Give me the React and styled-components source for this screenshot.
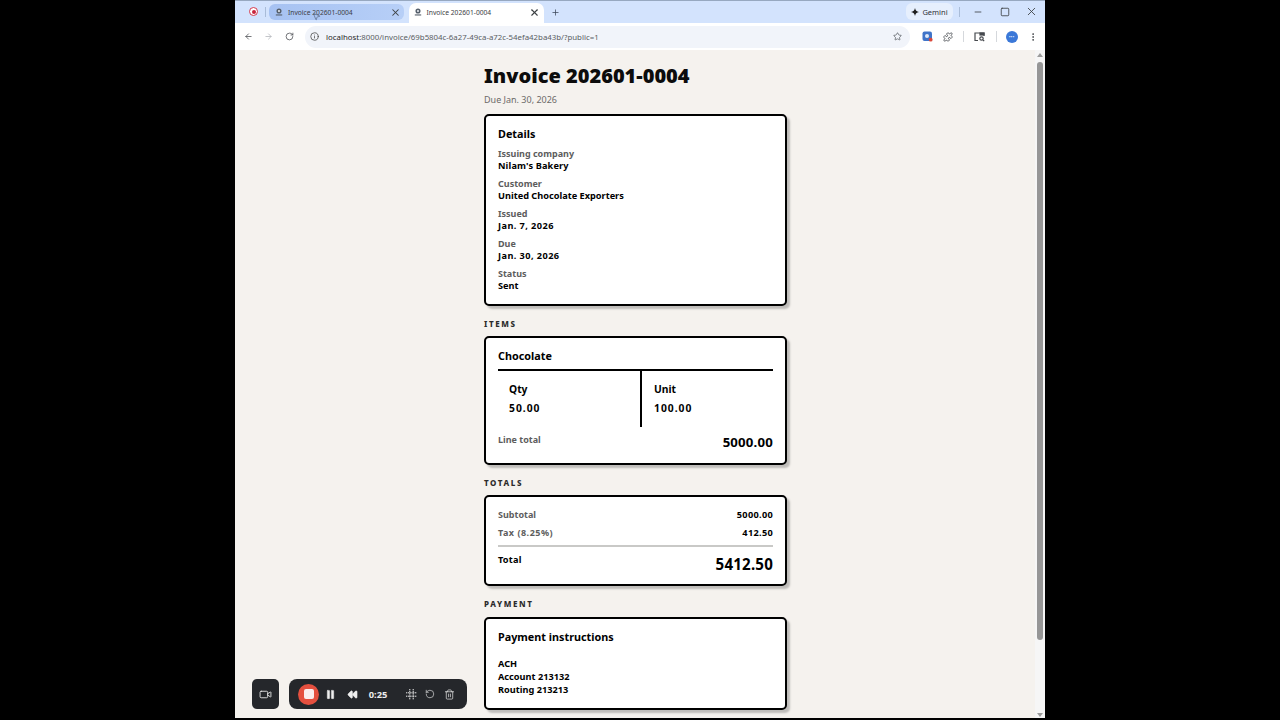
import React from 'react';
import styled, { createGlobalStyle } from 'styled-components';
import { ArrowLeft, ArrowRight, RotateCw, Info, Star, Puzzle, X, Plus, Minus, Square, MoreVertical, Video, Pause, Rewind, RotateCcw, Trash2, MousePointer2 } from 'lucide-react';

const Global = createGlobalStyle`
  html, body { margin: 0; padding: 0; background: #000; height: 720px; overflow: hidden; }
  #root { height: 720px; }
`;
const Stage = styled.div`
  width: 1280px; height: 720px; background: #000; display: flex; justify-content: center;
  font-family: "Noto Sans", "Open Sans", sans-serif; position: relative;
`;
const Win = styled.div`
  width: 810px; height: 718px; display: flex; flex-direction: column; overflow: hidden; background: #f5f2ee;
`;
const TitleBar = styled.div`
  height: 23px; background: #d3e3fd; box-shadow: inset 0 1px #97a8c0; display: flex; align-items: flex-end; flex: none; color: #1f1f1f; box-sizing: border-box;
`;
const RecDot = styled.div`
  width: 9px; height: 9px; border-radius: 50%; border: 1.5px solid #d33a4e; background: #fff; margin: 0 0 7px 14px;
  display: flex; align-items: center; justify-content: center; box-sizing: border-box; flex: none;
  &::after { content: ""; width: 4px; height: 4px; border-radius: 50%; background: #c8243c; }
`;
const Sep = styled.div`
  width: 1px; height: 10px; background: #a9bcd8; margin: ${p => p.$m || '0 0 6px 7px'}; flex: none;
`;
const Tab = styled.div`
  width: 135px; height: ${p => p.$active ? '20px' : '16px'};
  margin: ${p => p.$active ? '0 0 0 5px' : '0 0 3px 3px'};
  background: ${p => p.$active ? '#fff' : 'linear-gradient(90deg, #a6c2f2, #b7cff7)'}; border-radius: ${p => p.$active ? '7px 7px 0 0' : '6px'};
  display: flex; align-items: center; padding: ${p => p.$active ? '0 4px 2px 4.5px' : '0 3px 0 6px'}; box-sizing: border-box;
  font-size: 6.7px; color: #3c4043; white-space: nowrap; flex: none;
`;
const TabIcon = styled.svg`
  width: 8px; height: 8px; margin-right: 5px; flex: none;
`;
const TabTitle = styled.span` flex: 1; `;
const NewTab = styled.div`
  margin: 0 0 6px 7px; display: flex; color: #3c4758;
`;
const Spring = styled.div` flex: 1; `;
const Gemini = styled.div`
  height: 17px; width: 47px; margin-bottom: 3px; border-radius: 6px; background: #e6effd;
  display: flex; align-items: center; justify-content: center; gap: 3px; font-size: 7.5px; color: #303338; flex: none;
`;
const WinBtn = styled.div`
  width: 27px; height: 23px; display: flex; align-items: center; justify-content: center; color: #3c4043; align-self: flex-start; flex: none;
`;
const ToolBar = styled.div`
  height: 27px; background: #fff; display: flex; align-items: center; flex: none; color: #474a4f; padding-left: 3px; box-sizing: border-box;
`;
const NavBtn = styled.div`
  width: 20.5px; display: flex; justify-content: center; color: ${p => p.$off ? '#b0b3b8' : '#474a4f'}; flex: none;
`;
const Omni = styled.div`
  width: 605px; height: 22px; margin-left: 5.5px; border-radius: 11px; background: #f1f4fa; display: flex; align-items: center;
  padding: 0 8.5px 0 5px; box-sizing: border-box; font-size: 7.85px; color: #5a5e63; flex: none;
`;
const OmniInfo = styled.span` display: flex; margin-right: 7px; color: #444; `;
const UrlHost = styled.span` color: #1f1f1f; `;
const UrlText = styled.span` flex: 1; white-space: nowrap; `;
const ToolIcons = styled.div`
  flex: 1; display: flex; align-items: center; color: #474a4f; padding-left: 6.5px;
`;
const TIcon = styled.div`
  width: ${p => p.$w || 21}px; display: flex; justify-content: center; flex: none;
`;
const Avatar = styled.div`
  width: 12px; height: 12px; border-radius: 50%; background: #3b78d8; color: #dce9fb; font-size: 5px; display: flex; align-items: center; justify-content: center;
`;
const VSep = styled.div`
  width: 1px; height: 11px; background: #d5d8dc; flex: none; margin: 0 ${p => p.$m || 5}px;
`;
const Viewport = styled.div`
  flex: 1; display: flex; min-height: 0; overflow: hidden; background: #f5f2ee;
`;
const Page = styled.main`
  flex: 1; display: flex; justify-content: center; overflow: hidden; color: #000; padding-left: 1px;
`;
const Column = styled.div`
  width: 303px; padding-top: 13px; flex: none;
`;
const Title = styled.h1`
  margin: 0; font-size: 20px; line-height: 26px; font-weight: 900; color: #0c0c0c; white-space: nowrap;
`;
const Due = styled.p`
  margin: 3px 0 0; font-size: 9px; line-height: 15px; color: #6c6a68;
`;
const Card = styled.section`
  background: #fff; border: 2px solid #000; border-radius: 5px; box-shadow: 3px 3px 2px #bfbdba;
  box-sizing: border-box; height: ${p => p.$h}px; padding: ${p => p.$pad || '11px 12px'}; margin-top: ${p => p.$mt || 0}px;
`;
const CardTitle = styled.h2`
  margin: 0; font-size: 10.8px; line-height: 14px; font-weight: 700; color: #000;
`;
const Field = styled.div`
  margin-top: ${p => p.$mt}px;
`;
const Label = styled.div`
  font-size: 9px; line-height: 12px; font-weight: 700; color: #5d5d5d; letter-spacing: ${p => p.$ls || 0}px;
`;
const Value = styled.div`
  font-size: 9.2px; line-height: 12px; font-weight: 700; color: #000; letter-spacing: ${p => p.$ls || 0}px;
`;
const Section = styled.h3`
  margin: ${p => p.$mt}px 0 0; font-size: 8px; line-height: 12px; font-weight: 800; letter-spacing: 1.6px; color: #2b2b2b;
`;
const ItemGrid = styled.div`
  display: grid; grid-template-columns: 142px 1fr; border-top: 2px solid #000; margin-top: 6px; height: 58px; box-sizing: border-box;
`;
const ItemCell = styled.div`
  padding: 11px 0 0 ${p => p.$line ? 12 : 11}px; border-left: ${p => p.$line ? '2px solid #000' : '0'};
`;
const ItemLabel = styled.div`
  font-size: 10.3px; line-height: 14px; font-weight: 700;
`;
const ItemValue = styled.div`
  font-size: 10.3px; line-height: 14px; font-weight: 700; margin-top: 5px; letter-spacing: 1px;
`;
const Row = styled.div`
  display: flex; justify-content: space-between; align-items: ${p => p.$start ? 'flex-start' : 'center'}; margin-top: ${p => p.$mt || 0}px;
`;
const BigAmount = styled.div`
  font-size: ${p => p.$size}px; line-height: ${p => p.$lh}px; font-weight: 700; color: #000; letter-spacing: .2px;
`;
const Rule = styled.div`
  height: 2px; background: #c9c9c7; margin-top: 6px;
`;
const Note = styled.div`
  margin-top: 13.4px; font-size: 9.2px; line-height: 13px; font-weight: 700;
`;
const ScrollBar = styled.div`
  width: 10px; flex: none; background: #f6f6f6; display: flex; flex-direction: column; align-items: center; padding: 3px 0 0; box-sizing: border-box;
`;
const ArrowUp = styled.div`
  width: 0; height: 0; border-left: 3px solid transparent; border-right: 3px solid transparent; border-bottom: 4px solid #9c9c9c;
`;
const ArrowDown = styled.div`
  width: 0; height: 0; border-left: 3px solid transparent; border-right: 3px solid transparent; border-top: 4px solid #9c9c9c; margin-top: auto; margin-bottom: 1px;
`;
const Thumb = styled.div`
  width: 6px; height: 578px; background: #969696; border-radius: 3px; margin-top: 5px;
`;
const Recorder = styled.div`
  position: absolute; left: 252px; top: 679px; display: flex; gap: 10px; color: #eee;
`;
const CamBox = styled.div`
  width: 27px; height: 30px; border-radius: 5px; background: #25272b; display: flex; align-items: center; justify-content: center;
`;
const RecBar = styled.div`
  width: 178px; height: 30px; border-radius: 8px; background: #25272b; display: flex; align-items: center; padding-left: 9px; box-sizing: border-box; font-size: 9.3px; font-weight: 700;
`;
const StopBtn = styled.div`
  width: 21px; height: 21px; border-radius: 50%; background: #e5503f; display: flex; align-items: center; justify-content: center; flex: none;
  &::after { content: ""; width: 10px; height: 10px; background: #fbeeee; border-radius: 2px; }
`;
const Rb = styled.div`
  display: flex; justify-content: center; flex: none; width: ${p => p.$w}px; margin-left: ${p => p.$ml || 0}px;
`;
const Cursor = styled.div`
  position: absolute; left: 312px; top: 12px; color: #5d6f8c; display: flex;
`;

const Favicon = () => (
  <TabIcon viewBox="0 0 10 10"><circle cx="5" cy="3.8" r="3.2" fill="#56606c"/><circle cx="5" cy="3.8" r="1.3" fill="#e8ecf2"/><rect x="1" y="8" width="8" height="1.4" fill="#56606c"/></TabIcon>
);

export default function App() {
  return (
    <Stage>
      <Global />
      <Win>
        <TitleBar>
          <RecDot />
          <Sep />
          <Tab>
            <Favicon /><TabTitle>Invoice 202601-0004</TabTitle><X size={11} strokeWidth={2.2} />
          </Tab>
          <Tab $active>
            <Favicon /><TabTitle>Invoice 202601-0004</TabTitle><X size={11} strokeWidth={2.4} />
          </Tab>
          <NewTab><Plus size={9} strokeWidth={2} /></NewTab>
          <Spring />
          <Gemini>
            <svg width="8" height="8" viewBox="0 0 10 10"><path d="M5 0 C5.5 3 7 4.5 10 5 C7 5.5 5.5 7 5 10 C4.5 7 3 5.5 0 5 C3 4.5 4.5 3 5 0Z" fill="#1f1f1f"/></svg>
            Gemini
          </Gemini>
          <Sep $m="0 4px 6px 6px" />
          <WinBtn><Minus size={10} /></WinBtn>
          <WinBtn><Square size={10} strokeWidth={2} /></WinBtn>
          <WinBtn><X size={13} strokeWidth={1.6} /></WinBtn>
        </TitleBar>
        <ToolBar>
          <NavBtn><ArrowLeft size={9} strokeWidth={2} /></NavBtn>
          <NavBtn $off><ArrowRight size={9} strokeWidth={2} /></NavBtn>
          <NavBtn><RotateCw size={9} strokeWidth={2} /></NavBtn>
          <Omni>
            <OmniInfo><Info size={9} strokeWidth={2} /></OmniInfo>
            <UrlText><UrlHost>localhost</UrlHost>:8000/invoice/69b5804c-6a27-49ca-a72c-54efa42ba43b/?public=1</UrlText>
            <Star size={9} strokeWidth={2} />
          </Omni>
          <ToolIcons>
            <TIcon>
              <svg width="11" height="11" viewBox="0 0 11 11"><rect x=".5" y=".5" width="9.5" height="9.5" rx="2" fill="#3f74c9"/><circle cx="5" cy="5" r="2" fill="#dfe9f8"/><circle cx="8.7" cy="8.7" r="1.9" fill="#d9483b"/></svg>
            </TIcon>
            <TIcon><Puzzle size={10} strokeWidth={2} /></TIcon>
            <VSep $m={4} />
            <TIcon $w={24}>
              <svg width="11" height="10" viewBox="0 0 11 10" fill="none" stroke="#474a4f" strokeWidth="1.2"><path d="M4 8.5H1V1h9v3"/><circle cx="7.5" cy="6.5" r="1.7"/><path d="M9 8l1.2 1.2"/><rect x="6" y="1" width="4" height="2" fill="#474a4f"/></svg>
            </TIcon>
            <VSep $m={4} />
            <TIcon $w={22}><Avatar>•••</Avatar></TIcon>
            <TIcon $w={20}><MoreVertical size={10} strokeWidth={2.2} /></TIcon>
          </ToolIcons>
        </ToolBar>
        <Viewport>
          <Page>
            <Column>
              <Title>Invoice 202601-0004</Title>
              <Due>Due Jan. 30, 2026</Due>
              <Card $h={192} $mt={7}>
                <CardTitle>Details</CardTitle>
                <Field $mt={7}><Label>Issuing company</Label><Value $ls={0.15}>Nilam's Bakery</Value></Field>
                <Field $mt={6}><Label>Customer</Label><Value>United Chocolate Exporters</Value></Field>
                <Field $mt={6}><Label>Issued</Label><Value $ls={0.42}>Jan. 7, 2026</Value></Field>
                <Field $mt={6}><Label>Due</Label><Value $ls={0.42}>Jan. 30, 2026</Value></Field>
                <Field $mt={6}><Label>Status</Label><Value>Sent</Value></Field>
              </Card>
              <Section $mt={12}>ITEMS</Section>
              <Card $h={129} $mt={6}>
                <CardTitle>Chocolate</CardTitle>
                <ItemGrid>
                  <ItemCell>
                    <ItemLabel>Qty</ItemLabel><ItemValue>50.00</ItemValue>
                  </ItemCell>
                  <ItemCell $line>
                    <ItemLabel>Unit</ItemLabel><ItemValue>100.00</ItemValue>
                  </ItemCell>
                </ItemGrid>
                <Row $start $mt={7}>
                  <Label>Line total</Label>
                  <BigAmount $size={13.2} $lh={16}>5000.00</BigAmount>
                </Row>
              </Card>
              <Section $mt={12}>TOTALS</Section>
              <Card $h={91} $mt={6} $pad="12px 12px">
                <Row><Label>Subtotal</Label><Value $ls={0.3}>5000.00</Value></Row>
                <Row $mt={6}><Label $ls={0.5}>Tax (8.25%)</Label><Value $ls={0.3}>412.50</Value></Row>
                <Rule />
                <Row $start $mt={7}>
                  <Value $ls={0.2}>Total</Value>
                  <BigAmount $size={15.1} $lh={20}>5412.50</BigAmount>
                </Row>
              </Card>
              <Section $mt={12}>PAYMENT</Section>
              <Card $h={93} $mt={7}>
                <CardTitle>Payment instructions</CardTitle>
                <Note>ACH<br />Account 213132<br />Routing 213213</Note>
              </Card>
            </Column>
          </Page>
          <ScrollBar>
            <ArrowUp /><Thumb /><ArrowDown />
          </ScrollBar>
        </Viewport>
      </Win>
      <Cursor><MousePointer2 size={9} /></Cursor>
      <Recorder>
        <CamBox><Video size={13} strokeWidth={1.6} /></CamBox>
        <RecBar>
          <StopBtn />
          <Rb $w={21} $ml={1}><Pause size={11} fill="#eee" strokeWidth={1} /></Rb>
          <Rb $w={22}><Rewind size={11} fill="#eee" strokeWidth={1} /></Rb>
          <Rb $w={30}>0:25</Rb>
          <Rb $w={20} $ml={8}>
            <svg width="11" height="11" viewBox="0 0 11 11" stroke="#eee" strokeWidth="1" strokeDasharray="1.2 .6"><path d="M3.8 0v11M7.2 0v11M0 3.8h11M0 7.2h11"/></svg>
          </Rb>
          <Rb $w={18}><RotateCcw size={10} strokeWidth={1.5} /></Rb>
          <Rb $w={20}><Trash2 size={11} strokeWidth={1.5} /></Rb>
        </RecBar>
      </Recorder>
    </Stage>
  );
}
